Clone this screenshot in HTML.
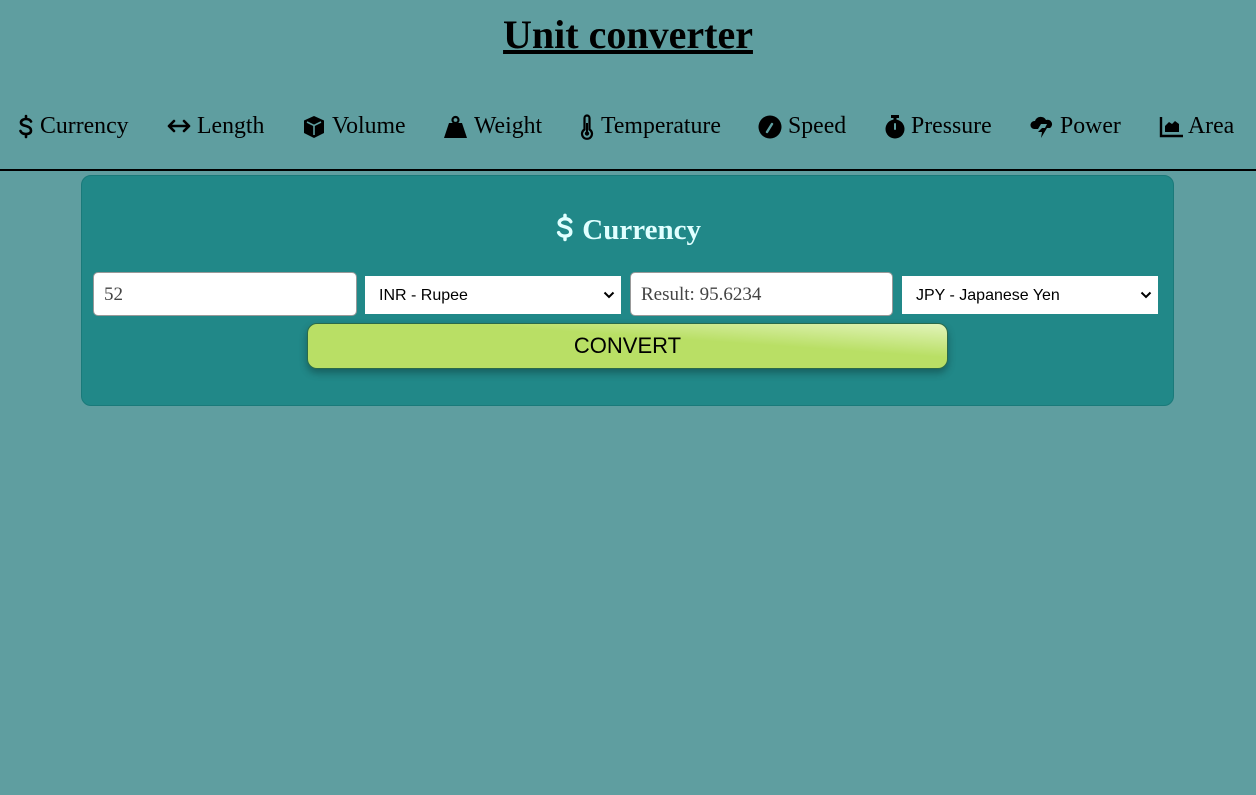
<!DOCTYPE html>
<html><head><meta charset="utf-8"><style>
*{box-sizing:border-box;margin:0;padding:0}
body{width:1256px;height:795px;background:#5f9ea0;font-family:"Liberation Serif",serif;position:relative;overflow:hidden}
h1{position:absolute;left:0;width:1256px;top:12px;text-align:center;font-size:40px;font-weight:bold;text-decoration:underline;color:#000;line-height:46px}
.nav{position:absolute;top:112px;font-size:23.8px;line-height:28px;color:#000;white-space:nowrap}
.ic{position:absolute;top:114px}
.line{position:absolute;left:0;top:169px;width:1256px;height:2px;background:#000}
.card{position:absolute;left:81px;top:175px;width:1093px;height:231px;background:#218888;border:1px solid #1a7a7a;border-radius:10px}
.h2{position:absolute;left:0;width:1256px;top:212px;text-align:center;font-size:29px;font-weight:bold;color:#e0ffff;line-height:36px}
.inp{position:absolute;top:272px;height:44px;background:#fff;border:1px solid #999;border-radius:5px;font-size:19px;color:#444;padding-left:10px;line-height:44px}
.sel{position:absolute;top:276px;height:38px;background:#fff;font-family:"Liberation Sans",sans-serif;font-size:16px;color:#000;padding-left:14px;line-height:39px}
.sel svg{position:absolute;right:6px;top:15px}
.btn{position:absolute;left:307px;top:323px;width:641px;height:46px;border-radius:10px;border:1px solid #2a6a4a;background:linear-gradient(to top right,#b9df65 62%,#e2f4ba 100%);box-shadow:0 4px 8px rgba(0,0,0,.3);text-align:center;font-family:"Liberation Sans",sans-serif;font-size:22px;line-height:44px;color:#000}
</style></head><body>
<h1>Unit converter</h1>

<svg class="ic" style="left:18px" width="16" height="26" viewBox="0 0 16 26"><path d="M13 7.5C12 5.5 10 5 8 5S3 6 3 8.5 6 11.5 8 12s5 1.5 5 4.5-3 3.5-5 3.5-4.5-.5-5.5-3M8 2v3M8 20v3" stroke="#000" stroke-width="2.6" fill="none" stroke-linecap="round"/></svg>
<span class="nav" style="left:40px">Currency</span>

<svg class="ic" style="left:166px" width="26" height="24" viewBox="0 0 26 24"><path d="M3 12h20M8 7l-5 5 5 5M18 7l5 5-5 5" stroke="#000" stroke-width="2.6" fill="none" stroke-linecap="round" stroke-linejoin="round"/></svg>
<span class="nav" style="left:197px">Length</span>

<svg class="ic" style="left:302px" width="24" height="26" viewBox="0 0 24 26"><path d="M12 2L22 6.5V19L12 24 2 19V6.5Z" fill="#000"/><path d="M5 8l7 3.5 7-3.5M12 11.5V21" stroke="#5f9ea0" stroke-width="1.6" fill="none"/></svg>
<span class="nav" style="left:332px">Volume</span>

<svg class="ic" style="left:443px" width="25" height="26" viewBox="0 0 25 26"><circle cx="12.5" cy="6" r="3" stroke="#000" stroke-width="2.2" fill="none"/><path d="M6 9h13l5 15H1Z" fill="#000"/></svg>
<span class="nav" style="left:474px">Weight</span>

<svg class="ic" style="left:580px" width="14" height="26" viewBox="0 0 14 26"><path d="M4.5 4a2.5 2.5 0 0 1 5 0v11.5a5 5 0 1 1-5 0Z" stroke="#000" stroke-width="2.2" fill="none"/><circle cx="7" cy="19.5" r="2.2" fill="#000"/><path d="M7 19V9" stroke="#000" stroke-width="2"/></svg>
<span class="nav" style="left:601px">Temperature</span>

<svg class="ic" style="left:758px" width="24" height="26" viewBox="0 0 24 26"><circle cx="12" cy="13" r="11.5" fill="#000"/><path d="M9 18l5-8" stroke="#5f9ea0" stroke-width="2.4" stroke-linecap="round"/></svg>
<span class="nav" style="left:788px">Speed</span>

<svg class="ic" style="left:884px" width="22" height="26" viewBox="0 0 22 26"><rect x="7" y="1" width="8" height="3" fill="#000"/><rect x="9.5" y="3" width="3" height="4" fill="#000"/><circle cx="11" cy="15" r="9.5" fill="#000"/><path d="M11 15V10" stroke="#5f9ea0" stroke-width="2" stroke-linecap="round"/></svg>
<span class="nav" style="left:911px">Pressure</span>

<svg class="ic" style="left:1029px" width="26" height="26" viewBox="0 0 26 26"><path d="M5 15a4 4 0 0 1 1-8 6 6 0 0 1 11-1 4.5 4.5 0 0 1 4 8H16l2-4h-6l-3 5Z" fill="#000"/><path d="M13 14h5l-6 10 1-6h-4Z" fill="#000"/></svg>
<span class="nav" style="left:1060px">Power</span>

<svg class="ic" style="left:1159px" width="25" height="26" viewBox="0 0 25 26"><path d="M2 3v19h22" stroke="#000" stroke-width="2.4" fill="none"/><path d="M6 18v-6l4-4 3 2 3-3 4 3v8Z" fill="#000"/></svg>
<span class="nav" style="left:1188px">Area</span>

<div class="line"></div>
<div class="card"></div>
<div class="h2"><svg width="20" height="30" viewBox="0 0 16 26" style="vertical-align:-4px"><path d="M13 7.5C12 5.5 10 5 8 5S3 6 3 8.5 6 11.5 8 12s5 1.5 5 4.5-3 3.5-5 3.5-4.5-.5-5.5-3M8 2v3M8 20v3" stroke="#e0ffff" stroke-width="3" fill="none" stroke-linecap="round"/></svg> Currency</div>

<div class="inp" style="left:93px;width:264px">52</div>
<div class="sel" style="left:365px;width:256px">INR - Rupee<svg width="12" height="8" viewBox="0 0 12 8"><path d="M1.5 1.5l4.5 4.5 4.5-4.5" stroke="#000" stroke-width="2" fill="none"/></svg></div>
<div class="inp" style="left:630px;width:263px">Result: 95.6234</div>
<div class="sel" style="left:902px;width:256px">JPY - Japanese Yen<svg width="12" height="8" viewBox="0 0 12 8"><path d="M1.5 1.5l4.5 4.5 4.5-4.5" stroke="#000" stroke-width="2" fill="none"/></svg></div>

<div class="btn">CONVERT</div>
</body></html>
